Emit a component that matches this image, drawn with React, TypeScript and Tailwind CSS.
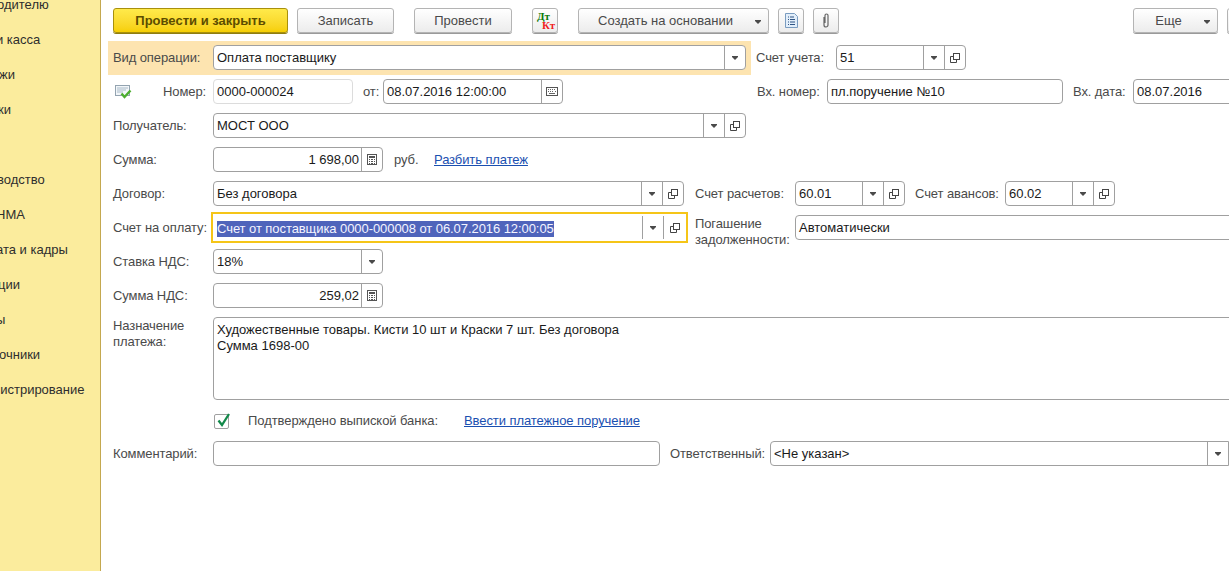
import React from "react";

const F = "font-['Liberation_Sans','Arial',sans-serif]";

function Arrow() {
  return <svg width="6" height="4" viewBox="0 0 6 4"><path d="M0 0h6v1L3 4 0 1z" fill="#4a4a4a" /></svg>;
}
function OpenIcon() {
  return (
    <svg width="10" height="10" viewBox="0 0 10 10" fill="none" stroke="#444">
      <rect x="3.500" y="0.500" width="6" height="6" />
      <path d="M3.500 3.500H0.500v6h6V6.500" />
    </svg>
  );
}
function CalcIcon() {
  return (
    <svg width="10" height="11" viewBox="0 0 10 11">
      <rect x="0.500" y="0.500" width="9" height="10" fill="#fff" stroke="#555" />
      <rect x="2" y="2" width="6" height="2" fill="#555" />
      <path d="M2 5h1v1H2zM4 5h2v1H4zM7 5h1v1H7zM2 7h1v1H2zM4 7h2v1H4zM7 7h1v1H7zM2 9h1v1H2zM4 9h2v1H4zM7 9h1v1H7z" fill="#555" />
    </svg>
  );
}
function CalendarIcon() {
  return (
    <svg width="12" height="9" viewBox="0 0 12 9">
      <rect x="0.500" y="0.500" width="11" height="8" fill="#fff" stroke="#555" />
      <path d="M2 2h1v1H2zM4 2h1v1H4zM6 2h1v1H6zM8 2h1v1H8zM9 4h1v1H9zM2 4h1v1H2zM4 4h1v1H4zM6 4h1v1H6zM3 6h6v1H3z" fill="#666" />
    </svg>
  );
}

function Seg({ w = 21, children, cls = "h-full" }: { w?: number; children: React.ReactNode; cls?: string }) {
  return (
    <span className={`flex shrink-0 items-center justify-center border-l border-[#a0a0a0] ${cls}`} style={{ width: w }}>
      {children}
    </span>
  );
}

function Field({
  w,
  value,
  right,
  segs,
  light,
  cls = "",
}: {
  w: number;
  value?: string;
  right?: boolean;
  segs?: React.ReactNode;
  light?: boolean;
  cls?: string;
}) {
  return (
    <div
      className={`flex h-[25px] shrink-0 items-center rounded-[4px] border bg-white ${light ? "border-[#dcdcdc]" : "border-[#a0a0a0]"} ${cls}`}
      style={{ width: w }}
    >
      <span className={`min-w-0 flex-1 overflow-hidden whitespace-nowrap text-[13px] text-[#1a1a1a] ${right ? "pr-[2px] text-right" : "pl-[3px]"}`}>{value}</span>
      {segs}
    </div>
  );
}

function Label({ w, children, cls = "" }: { w: number; children: React.ReactNode; cls?: string }) {
  return (
    <span className={`flex h-[25px] shrink-0 items-center whitespace-nowrap text-[13px] tracking-[-0.1px] text-[#4a4a4a] ${cls}`} style={{ width: w }}>
      {children}
    </span>
  );
}

function Btn({ w, children, cls = "", arrow, yellow }: { w: number; children?: React.ReactNode; cls?: string; arrow?: boolean; yellow?: boolean }) {
  const skin = yellow
    ? "border-[#a8900c] bg-gradient-to-b from-[#ffea4a] to-[#f6cf00] font-bold text-[#5c4c00] shadow-[0_1px_0_#8f7d10]"
    : "border-[#b4b4b4] bg-gradient-to-b from-white to-[#ececec] text-[#4a4a4a] shadow-[0_1px_0_#9a9a9a]";
  return (
    <div
      className={`relative flex h-[25px] shrink-0 items-center justify-center rounded-[3px] border text-[13px] ${skin} ${cls}`}
      style={{ width: w }}
    >
      {children}
      {arrow && (
        <span className="absolute right-[7px] top-[11px] flex">
          <Arrow />
        </span>
      )}
    </div>
  );
}

const side: [string, number][] = [
  ["одителю", -3],
  ["и касса", -4],
  ["жи", -1],
  ["ки", -2],
  ["", 0],
  ["водство", -3],
  ["НМА", -4],
  ["ата и кадры", -4],
  ["ции", -2],
  ["ы", -4],
  ["очники", -1],
  ["нистрирование", -7],
];

export default function App() {
  return (
    <div className={`flex h-[571px] w-[1229px] overflow-hidden bg-white ${F}`}>
      <aside className="h-full w-[101px] shrink-0 overflow-hidden border-r border-[#c4a84f] bg-[#fbec9d]">
        <ul className="-mt-[13px] flex flex-col">
          {side.map(([s, off], i) => (
            <li key={i} className="flex h-[35px] items-center whitespace-nowrap text-[13px] text-[#2e2e2e]">
              <span style={{ marginLeft: off }}>{s}</span>
            </li>
          ))}
        </ul>
      </aside>

      <main className="min-w-0 flex-1 overflow-hidden pl-[12px] pt-[8px]">
        {/* Toolbar */}
        <div className="flex w-[1200px] items-start">
          <Btn w={175} yellow>Провести и закрыть</Btn>
          <Btn w={97} cls="ml-[9px]">Записать</Btn>
          <Btn w={98} cls="ml-[20px]">Провести</Btn>
          <Btn w={26} cls="ml-[20px]">
            <span className="relative block h-[20px] w-[22px] font-['Liberation_Serif',serif] text-[11px] font-bold leading-[9px]">
              <span className="absolute left-[3px] top-[1px] text-[#0a7a0a]">Дт</span>
              <span className="absolute left-[8px] top-[10px] text-[#f02020]">Кт</span>
            </span>
          </Btn>
          <Btn w={191} cls="ml-[20px] pr-[16px]" arrow>Создать на основании</Btn>
          <Btn w={26} cls="ml-[9px]">
            <svg width="13" height="15" viewBox="0 0 13 15">
              <path d="M.5.5h9l3 3v11H.5z" fill="#e2eefa" stroke="#7a9cc0" />
              <path d="M3 4h1M5 4h4M3 6.500h1M5 6.500h5M3 9h1M5 9h5M3 11.500h1M5 11.500h5" stroke="#2f5585" />
            </svg>
          </Btn>
          <Btn w={26} cls="ml-[9px]">
            <svg width="10" height="17" viewBox="0 0 10 17" fill="none" stroke="#666" strokeWidth="1.200">
              <path d="M3 5v8a2 2 0 0 0 4 0V3.500a1.500 1.500 0 0 0-3 0V11" />
            </svg>
          </Btn>
          <Btn w={85} cls="ml-[294px] pr-[14px]" arrow>Еще</Btn>
          <Btn w={26} cls="ml-[9px]" />
        </div>

        {/* Form */}
        <div className="mt-[8px] flex w-[1300px] flex-col">
          {/* Row 1 */}
          <div className="-ml-[5px] flex h-[34px] items-start">
            <div className="flex h-[34px] w-[643px] shrink-0 bg-[#fde4b0] pl-[5px] pt-[4px]">
              <Label w={100}>Вид операции:</Label>
              <Field w={533} value="Оплата поставщику" segs={<Seg><Arrow /></Seg>} />
            </div>
            <div className="flex pl-[5px] pt-[4px]">
              <Label w={80}>Счет учета:</Label>
              <Field w={130} value="51" segs={<><Seg><Arrow /></Seg><Seg><OpenIcon /></Seg></>} />
            </div>
          </div>

          <div className="mt-[4px] flex flex-col gap-[9px]">
            {/* Row 2 */}
            <div className="flex h-[25px] items-start">
              <span className="flex h-[25px] w-[50px] shrink-0 items-center pl-[2px]">
                <svg width="17" height="14" viewBox="0 0 17 14">
                  <rect x="0.500" y="0.500" width="14" height="10" fill="#f2f6f9" stroke="#93a3b0" />
                  <path d="M2 3h11M2 5h9M2 7h6" stroke="#a9bac8" />
                  <path d="M6.500 8.500l3 3.500L15.500 5.500" fill="none" stroke="#4cae2e" strokeWidth="2.400" />
                </svg>
              </span>
              <Label w={50}>Номер:</Label>
              <Field w={140} value="0000-000024" light />
              <Label w={20} cls="ml-[10px]">от:</Label>
              <Field w={180} value="08.07.2016 12:00:00" segs={<Seg><CalendarIcon /></Seg>} />
              <Label w={70} cls="ml-[194px]">Вх. номер:</Label>
              <Field w={236} value="пл.поручение №10" />
              <Label w={60} cls="ml-[10px]">Вх. дата:</Label>
              <Field w={160} value="08.07.2016" />
            </div>
            {/* Row 3 */}
            <div className="flex h-[25px] items-start">
              <Label w={100}>Получатель:</Label>
              <Field w={533} value="МОСТ ООО" segs={<><Seg><Arrow /></Seg><Seg><OpenIcon /></Seg></>} />
            </div>
            {/* Row 4 */}
            <div className="flex h-[25px] items-start">
              <Label w={100}>Сумма:</Label>
              <Field w={170} value="1 698,00" right segs={<Seg><CalcIcon /></Seg>} />
              <Label w={40} cls="ml-[11px]">руб.</Label>
              <a className="flex h-[25px] items-center whitespace-nowrap text-[13px] tracking-[-0.1px] text-[#1a4fb0] underline">Разбить платеж</a>
            </div>
            {/* Row 5 */}
            <div className="flex h-[25px] items-start">
              <Label w={100}>Договор:</Label>
              <Field w={471} value="Без договора" segs={<><Seg><Arrow /></Seg><Seg><OpenIcon /></Seg></>} />
              <Label w={100} cls="ml-[11px]">Счет расчетов:</Label>
              <Field w={110} value="60.01" segs={<><Seg><Arrow /></Seg><Seg><OpenIcon /></Seg></>} />
              <Label w={90} cls="ml-[10px]">Счет авансов:</Label>
              <Field w={110} value="60.02" segs={<><Seg><Arrow /></Seg><Seg><OpenIcon /></Seg></>} />
            </div>
            {/* Row 6 */}
            <div className="flex h-[25px] items-start">
              <Label w={98}>Счет на оплату:</Label>
              <div className="-mt-[3px] flex h-[31px] w-[477px] shrink-0 items-center border-2 border-[#f5c518] bg-white pl-[4px]">
                <span className="min-w-0 flex-1">
                  <span className="inline-block h-[16px] whitespace-nowrap bg-[#4f64bb] text-[13px] leading-[16px] tracking-[-0.07px] text-[#f4f4ff]">
                    Счет от поставщика 0000-000008 от 06.07.2016 12:00:05
                  </span>
                </span>
                <Seg w={21} cls="h-[23px]"><Arrow /></Seg>
                <Seg w={23} cls="h-[23px]"><OpenIcon /></Seg>
              </div>
              <span className="ml-[7px] block w-[100px] shrink-0 pt-[1px] text-[13px] leading-[16px] tracking-[-0.1px] text-[#4a4a4a]">
                Погашение задолженности:
              </span>
              <Field w={500} value="Автоматически" />
            </div>
            {/* Row 7 */}
            <div className="flex h-[25px] items-start">
              <Label w={100}>Ставка НДС:</Label>
              <Field w={170} value="18%" segs={<Seg><Arrow /></Seg>} />
            </div>
            {/* Row 8 */}
            <div className="flex h-[25px] items-start">
              <Label w={100}>Сумма НДС:</Label>
              <Field w={170} value="259,02" right segs={<Seg><CalcIcon /></Seg>} />
            </div>
            {/* Row 9 */}
            <div className="flex h-[83px] items-start">
              <span className="block w-[100px] shrink-0 pt-[1px] text-[13px] leading-[16px] tracking-[-0.1px] text-[#4a4a4a]">
                Назначение платежа:
              </span>
              <div className="h-[83px] w-[1100px] shrink-0 rounded-[4px] border border-[#a0a0a0] bg-white pl-[3px] pt-[4px] text-[13px] leading-[16px] text-[#1a1a1a]">
                <p>Художественные товары. Кисти 10 шт и Краски 7 шт. Без договора</p>
                <p>Сумма 1698-00</p>
              </div>
            </div>
          </div>

          {/* Row 10 */}
          <div className="mt-[8px] flex h-[26px] items-center pl-[101px]">
            <span className="relative h-[15px] w-[15px] shrink-0 rounded-[2px] border border-[#a0a0a0] bg-white">
              <svg className="absolute -top-[3px] left-[1px]" width="15" height="16" viewBox="0 0 15 16">
                <path d="M2.500 8.500l3.500 4.500L13 2" fill="none" stroke="#12894a" strokeWidth="2.300" />
              </svg>
            </span>
            <span className="ml-[19px] w-[216px] shrink-0 whitespace-nowrap text-[13px] tracking-[-0.07px] text-[#4a4a4a]">Подтверждено выпиской банка:</span>
            <a className="whitespace-nowrap text-[13px] tracking-[-0.08px] text-[#1a4fb0] underline">Ввести платежное поручение</a>
          </div>

          {/* Row 11 */}
          <div className="mt-[7px] flex h-[25px] items-start">
            <Label w={100}>Комментарий:</Label>
            <Field w={447} />
            <Label w={100} cls="ml-[10px]">Ответственный:</Label>
            <Field w={459} value="<Не указан>" segs={<Seg w={21}><Arrow /></Seg>} cls="!rounded-r-none" />
          </div>
        </div>
      </main>
    </div>
  );
}
